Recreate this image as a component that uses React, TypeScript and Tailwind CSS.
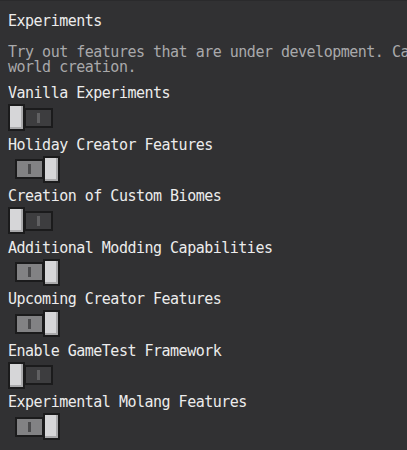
import React from 'react';

const experiments = [
  { label: 'Vanilla Experiments', on: false },
  { label: 'Holiday Creator Features', on: true },
  { label: 'Creation of Custom Biomes', on: false },
  { label: 'Additional Modding Capabilities', on: true },
  { label: 'Upcoming Creator Features', on: true },
  { label: 'Enable GameTest Framework', on: false },
  { label: 'Experimental Molang Features', on: true },
];

function Toggle({ on }: { on: boolean }) {
  const knob = (
    <div className="w-[17px] h-[27px] border-2 border-[#1b1b1c] bg-[#d6d6d8] shadow-[inset_-2px_-2px_0_#a9a9ab] shrink-0 relative z-10" />
  );
  return (
    <div className={`flex items-center ${on ? 'ml-[7px]' : ''}`}>
      {!on && knob}
      <div
        className={`w-[29px] h-[20px] border-2 border-[#1b1b1c] flex items-center justify-center ${
          on ? 'bg-[#828284] -mr-px' : 'bg-[#3d3d3f] -ml-px'
        }`}
      >
        <div className={`w-[3px] h-[10px] ${on ? 'bg-[#4b4b4d]' : 'bg-[#606062]'}`} />
      </div>
      {on && knob}
    </div>
  );
}

export default function App() {
  return (
    <div
      className="w-[407px] h-[450px] overflow-hidden bg-[#313133] border-t border-[#2a2a2c] pl-[8px] text-[15px] leading-[15px] tracking-[-0.5px] text-[#ececec]"
      style={{ fontFamily: '"DejaVu Sans Mono", "Liberation Mono", monospace' }}
    >
      {/* Header */}
      <div className="pt-[13px]">Experiments</div>
      <div className="mt-[16px] text-[#a9a9ab] whitespace-nowrap">
        <div className="h-[15px]">Try out features that are under development. Can only be enabled during</div>
        <div className="h-[15px]">world creation.</div>
      </div>

      {/* Toggles */}
      <div className="mt-[11px] flex flex-col gap-[6.5px]">
        {experiments.map((exp) => (
          <div key={exp.label} className="flex flex-col gap-[3px]">
            <div>{exp.label}</div>
            <Toggle on={exp.on} />
          </div>
        ))}
      </div>
    </div>
  );
}
